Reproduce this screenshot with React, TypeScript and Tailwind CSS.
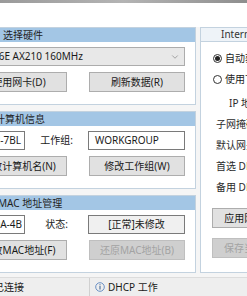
import React from 'react';
import { ChevronDown } from 'lucide-react';

const font = "font-['Noto_Sans','Noto_Sans_CJK_SC',sans-serif]";

const Button: React.FC<{ children: React.ReactNode; disabled?: boolean; className?: string }> = ({
  children,
  disabled = false,
  className = '',
}) => (
  <div
    className={`h-[20px] flex items-center justify-center whitespace-nowrap border text-[10px] ${
      disabled
        ? 'bg-[#cfcfcf] border-[#bfbfbf] text-[#a3a3a3]'
        : 'bg-[#e1e1e1] border-[#adadad] text-[#1a1a1a]'
    } ${className}`}
  >
    {children}
  </div>
);

const Panel: React.FC<{ title: string; titleClass?: string; children: React.ReactNode }> = ({
  title,
  titleClass = '',
  children,
}) => (
  <div className="h-[78px] border border-[#c3d2df] bg-white flex flex-col">
    <div className="h-[14px] bg-[#a3c6e5] flex items-center pl-[72px] text-[10px] text-[#1f1f1f] whitespace-nowrap">
      <span className={titleClass}>{title}</span>
    </div>
    <div className="px-[10px] pt-[5px] flex flex-col gap-[6px]">{children}</div>
  </div>
);

const Radio: React.FC<{ checked?: boolean; label: string }> = ({ checked = false, label }) => (
  <div className="flex items-center gap-[3px] h-[12px] whitespace-nowrap">
    <div className="w-[9px] h-[9px] rounded-full border border-[#333] bg-white flex items-center justify-center">
      {checked && <div className="w-[5px] h-[5px] rounded-full bg-[#222]" />}
    </div>
    <span className="text-[10px] text-[#1a1a1a]">{label}</span>
  </div>
);

export default function App() {
  return (
    <div className={`w-[247px] h-[296px] overflow-hidden bg-[#f5f5f5] flex flex-col ${font}`}>
      <div className="h-[3px] bg-gradient-to-r from-[#9a9a9a] via-[#b4b4b4] to-[#8e8e8e]" />
      <div className="h-[24px] bg-white" />

      <div className="flex gap-[4px] ml-[-70px]">
        {/* left column */}
        <div className="w-[266px] shrink-0 flex flex-col gap-[6px]">
          <Panel title="选择硬件">
            <div className="h-[19px] border border-[#acacac] bg-[#e8e8e8] flex items-center pl-[3px] pr-[4px] text-[10px] text-[#1a1a1a] whitespace-nowrap overflow-hidden">
              <span className="flex-1 ml-[-8px]">Intel(R) Wi-Fi 6E AX210 160MHz</span>
              <ChevronDown size={10} strokeWidth={1.5} color="#777" />
            </div>
            <div className="flex justify-end gap-[22px]">
              <Button className="w-[96px]">使用网卡(D)</Button>
              <Button className="w-[96px]">刷新数据(R)</Button>
            </div>
          </Panel>

          <Panel title="计算机信息" titleClass="ml-[-8px]">
            <div className="h-[19px] flex items-center">
              <div className="w-[84px] h-full border border-[#7a7a7a] bg-white flex items-center justify-end pr-[3px] overflow-hidden text-[10px] text-[#1a1a1a] whitespace-nowrap">
                DESKTOP-Q3N-7BL
              </div>
              <div className="flex-1 text-center text-[10px] text-[#1a1a1a]">工作组:</div>
              <div className="w-[97px] h-full border border-[#7a7a7a] bg-white flex items-center pl-[6px] text-[10px] text-[#1a1a1a]">
                WORKGROUP
              </div>
            </div>
            <div className="flex justify-end gap-[22px]">
              <Button className="w-[96px]">修改计算机名(N)</Button>
              <Button className="w-[96px]">修改工作组(W)</Button>
            </div>
          </Panel>

          <Panel title="MAC 地址管理" titleClass="ml-[-5px]">
            <div className="h-[19px] flex items-center">
              <div className="w-[84px] h-full border border-[#7a7a7a] bg-white flex items-center justify-end pr-[2px] overflow-hidden text-[10px] text-[#1a1a1a] whitespace-nowrap">
                E4-C7-67-0A-4B
              </div>
              <div className="flex-1 text-center text-[10px] text-[#1a1a1a]">状态:</div>
              <div className="w-[97px] h-full border border-[#7a7a7a] bg-[#f0f0f0] flex items-center justify-center text-[10px] text-[#1a1a1a]">
                [正常]未修改
              </div>
            </div>
            <div className="flex justify-end gap-[22px]">
              <Button className="w-[96px]">修改MAC地址(F)</Button>
              <Button className="w-[96px]" disabled>
                还原MAC地址(B)
              </Button>
            </div>
          </Panel>
        </div>

        {/* right panel */}
        <div className="w-[160px] shrink-0 h-[246px] border border-[#c3d2df] bg-white flex flex-col">
          <div className="h-[14px] bg-[#eef3f8] border-b border-[#c3d2df] flex items-center pl-[20px] text-[10px] text-[#333] whitespace-nowrap">
            Internet 协议版本 4 (TCP/IPv4)
          </div>
          <div className="pl-[12px] pt-[10px] flex flex-col gap-[9px]">
            <Radio checked label="自动获得 IP 地址(O)" />
            <Radio label="使用下面的 IP 地址(S)" />
          </div>
          <div className="pt-[11px] flex flex-col gap-[7px] text-[10px] text-[#2a2a2a] whitespace-nowrap">
            <div className="h-[14px] flex items-center pl-[28px]">IP 地址(I):</div>
            <div className="h-[14px] flex items-center pl-[15px]">子网掩码(U):</div>
            <div className="h-[14px] flex items-center pl-[15px]">默认网关(D):</div>
            <div className="h-[14px] flex items-center pl-[15px]">首选 DNS 服务器(P):</div>
            <div className="h-[14px] flex items-center pl-[15px]">备用 DNS 服务器(A):</div>
          </div>
          <div className="pl-[11px] pt-[14px] flex flex-col gap-[10px]">
            <Button className="w-[96px]">应用网络配置(Y)</Button>
            <Button className="w-[96px]" disabled>
              保存当前配置(V)
            </Button>
          </div>
        </div>
      </div>

      <div className="flex-1" />
      <div className="h-[19px] bg-[#eeeeee] border-t border-[#dcdcdc] flex items-center text-[10px] text-[#1a1a1a] whitespace-nowrap">
        <div className="w-[96px] h-full flex items-center ml-[-6px] border-r border-[#d0d0d0]">已连接</div>
        <div className="flex items-center gap-[3px] pl-[5px]">
          <svg width="10" height="10" viewBox="0 0 10 10">
            <circle cx="5" cy="5" r="4.3" fill="none" stroke="#5b86c0" strokeWidth="0.9" />
            <rect x="4.5" y="4" width="1" height="3.5" fill="#2f5a90" />
            <rect x="4.5" y="2.3" width="1" height="1" fill="#2f5a90" />
          </svg>
          <span>DHCP 工作</span>
        </div>
      </div>
    </div>
  );
}
